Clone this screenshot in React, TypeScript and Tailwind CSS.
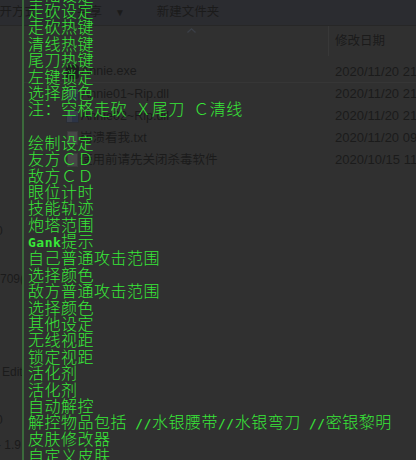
import React from 'react';

// half-width segment in the overlay (the cheat menu font is 8px per latin cell)
const M: React.FC<{ children: React.ReactNode; bold?: boolean }> = ({ children, bold }) => (
  <span className={`font-['DejaVu_Sans_Mono',monospace] text-[13px] leading-none whitespace-pre ${bold ? 'font-bold' : 'font-normal'}`}>
    {children}
  </span>
);

const menu: React.ReactNode[] = [
  '基础设定',
  '走砍设定',
  '走砍热键',
  '清线热键',
  '尾刀热键',
  '左键锁定',
  '选择颜色',
  <>注：空格走砍<M> </M>Ｘ尾刀<M> </M>Ｃ清线</>,
  '\u00a0',
  '绘制设定',
  '友方ＣＤ',
  '敌方ＣＤ',
  '眼位计时',
  '技能轨迹',
  '炮塔范围',
  <><M bold>Gank</M>提示</>,
  '自己普通攻击范围',
  '选择颜色',
  '敌方普通攻击范围',
  '选择颜色',
  '其他设定',
  '无线视距',
  '锁定视距',
  '活化剂',
  '活化剂',
  '自动解控',
  <>解控物品包括<M> //</M>水银腰带<M>//</M>水银弯刀<M> //</M>密银黎明</>,
  '皮肤修改器',
  '自定义皮肤',
];

const files = [
  { name: 'Annie.exe', date: '2020/11/20 21:14', icon: 'exe' },
  { name: 'Annie01~Rip.dll', date: '2020/11/20 21:14', icon: 'dll' },
  { name: 'Annie02~Rip.dll', date: '2020/11/20 21:14', icon: 'dll' },
  { name: '崩溃看我.txt', date: '2020/11/20 09:32', icon: 'txt' },
  { name: '使用前请先关闭杀毒软件', date: '2020/10/15 11:08', icon: 'txt' },
];

const FileIcon: React.FC<{ kind: string }> = ({ kind }) => {
  if (kind === 'exe') return <div className="w-[13px] h-[14px] rounded-[3px] bg-[#1c1c1e]" />;
  if (kind === 'dll')
    return (
      <div className="w-[13px] h-[13px] bg-[#3a3f4a] border border-[#2a2d33] flex items-end justify-end">
        <div className="w-[6px] h-[6px] bg-[#2c3446]" />
      </div>
    );
  return <div className="w-[11px] h-[14px] ml-[1px] bg-[#464646] border border-[#3a3a3a]" />;
};

export default function App() {
  return (
    <div className="relative w-[416px] h-[460px] overflow-hidden bg-[#303030] font-['Liberation_Sans','Noto_Sans_CJK_SC',sans-serif] text-[12px] text-[#1b1b1b]">
      {/* Explorer window behind the overlay */}
      <div className="flex flex-col h-full">
        <div className="h-[26px] shrink-0 bg-[#2b2c30] border-b border-[#272727] flex items-center whitespace-nowrap text-[12.5px]">
          <span className="ml-[-13px]">打开方式</span>
          <span className="ml-[6px] text-[10px]">▼</span>
          <span className="ml-[24px]">共享</span>
          <span className="ml-[13px] text-[10px]">▼</span>
          <span className="ml-[32px]">新建文件夹</span>
        </div>
        <div className="flex flex-1 min-h-0">
          {/* navigation pane */}
          <div className="w-[22px] shrink-0 flex flex-col leading-[14px] whitespace-nowrap overflow-hidden">
            <span className="mt-[198px] ml-[-4px]">0</span>
            <span className="mt-[34px]">709(</span>
            <span className="mt-[79px] ml-[2px]">Edit</span>
            <span className="mt-[34px] ml-[-4px]">0</span>
            <span className="mt-[11px] ml-[-3px]">- 1.9</span>
          </div>
          {/* file list */}
          <div className="flex-1 flex flex-col">
            <div className="h-[30px] flex shrink-0">
              <div className="w-[306px] pl-[165px] pt-[2px]">
                <svg width="9" height="5" viewBox="0 0 9 5">
                  <path d="M0.5 4.5 L4.5 0.8 L8.5 4.5" fill="none" stroke="#3c4048" strokeWidth="1.2" />
                </svg>
              </div>
              <div className="flex-1 border-l border-[#383838] pl-[6px] flex items-center whitespace-nowrap text-[12.5px]">修改日期</div>
            </div>
            <div className="flex flex-col pt-[5px]">
              {files.map((f, i) => (
                <div
                  key={f.name}
                  className={`h-[22px] flex items-center whitespace-nowrap ${i === 0 ? 'border-b border-[#363636]' : ''}`}
                >
                  <div className="w-[306px] flex items-center pl-[44px]">
                    <FileIcon kind={f.icon} />
                    <span className="ml-[2px] text-[12.5px]">{f.name}</span>
                  </div>
                  <span className="pl-[7px] text-[13px]">{f.date}</span>
                </div>
              ))}
            </div>
          </div>
        </div>
      </div>

      {/* cheat menu overlay */}
      <div className="absolute top-0 bottom-0 left-[22px] right-0 border-l-2 border-[#3b6a3b] pl-[4px] overflow-hidden">
        <div className="mt-[-14.4px] flex flex-col font-['Noto_Sans_CJK_SC',sans-serif] font-light text-[16px] leading-[16.4px] tracking-[0.5px] text-[#38e838] whitespace-pre">
          {menu.map((line, i) => (
            <div key={i}>{line}</div>
          ))}
        </div>
      </div>
    </div>
  );
}
